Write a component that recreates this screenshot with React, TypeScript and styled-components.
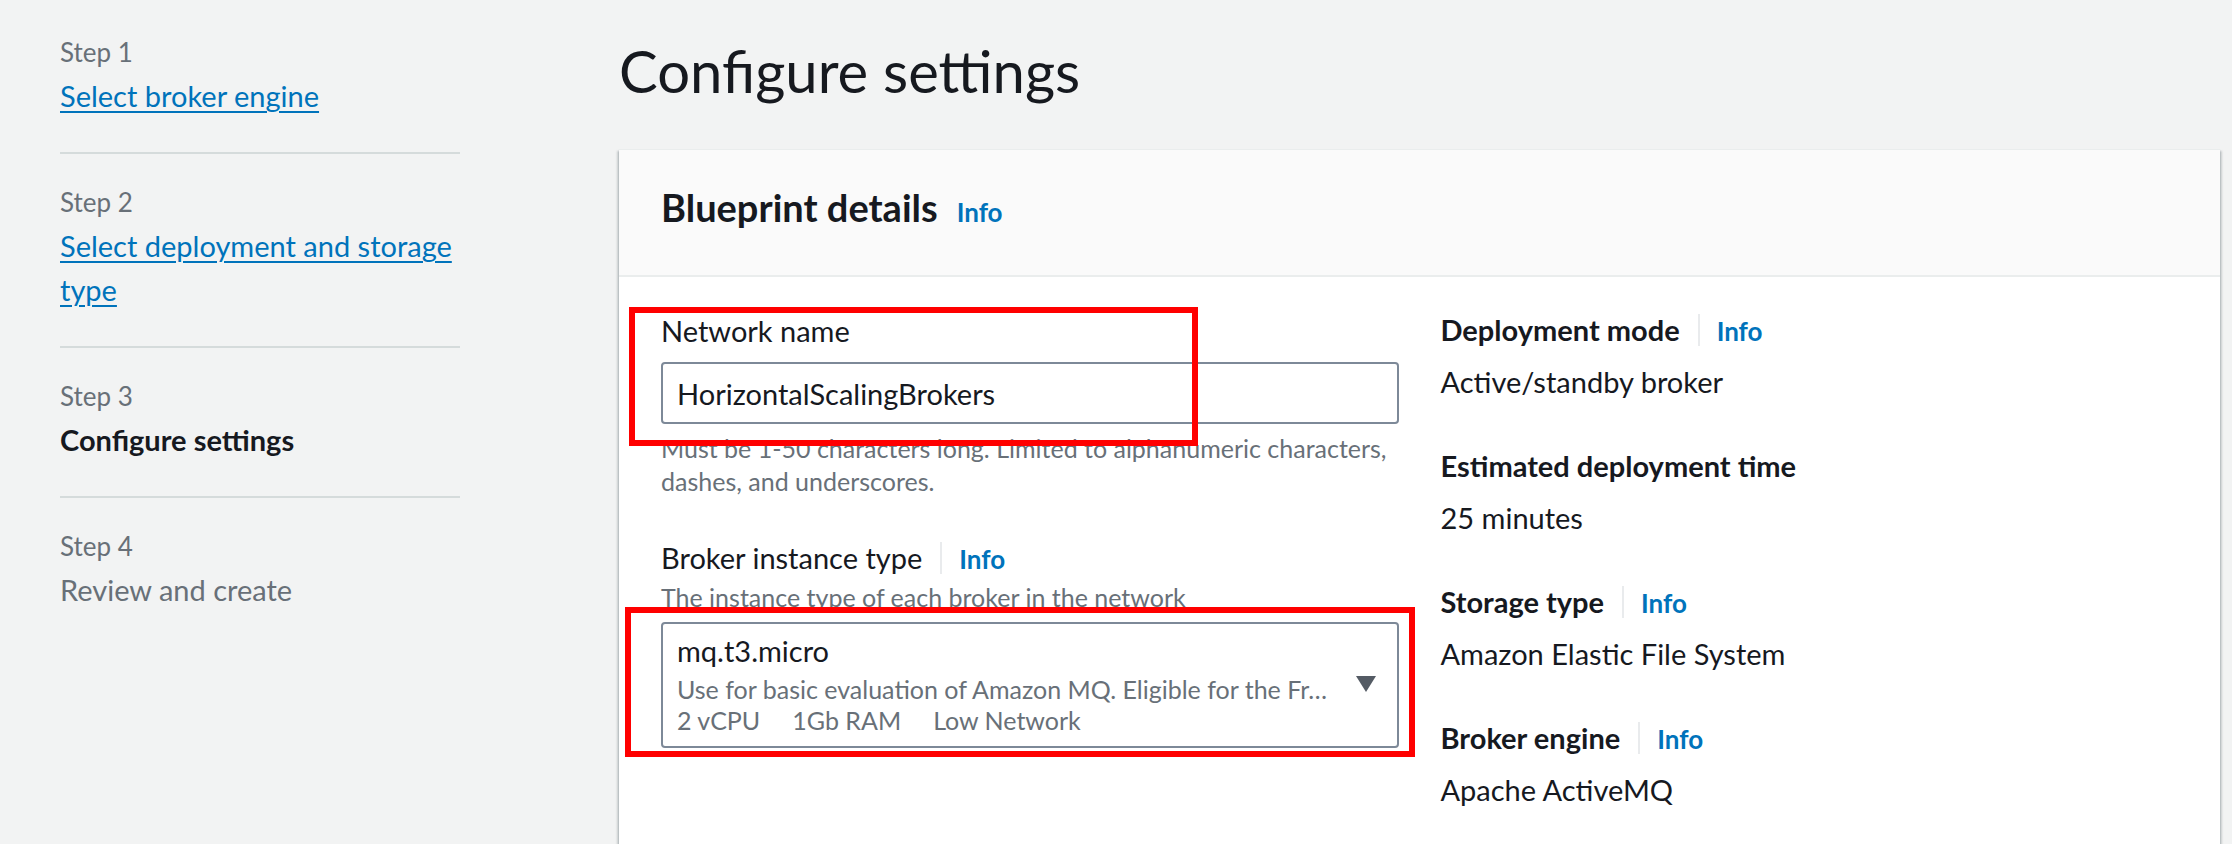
import React from "react";
import styled, { createGlobalStyle } from "styled-components";

const GlobalStyle = createGlobalStyle`
  html, body {
    margin: 0;
    padding: 0;
    background: #f2f3f3;
  }
  body {
    font-family: Lato, "Open Sans", "Liberation Sans", Arial, sans-serif;
    color: #16191f;
    overflow: hidden;
    -webkit-font-smoothing: antialiased;
  }
  *, *::before, *::after {
    box-sizing: border-box;
  }
`;

const Page = styled.div`
  display: flex;
  align-items: flex-start;
  height: 844px;
  padding: 0 12px 0 60px;
`;

/* ---------- Side navigation ---------- */

const Nav = styled.nav`
  flex: none;
  width: 400px;
  padding-top: 4px;
`;

const NavItem = styled.div`
  padding: 30px 0 34px;
  border-bottom: 2px solid #d5dbdb;
  &:last-child {
    border-bottom: none;
  }
`;

const StepLabel = styled.div`
  font-size: 26px;
  line-height: 36px;
  color: #687078;
  margin-bottom: 4px;
`;

type StepState = "done" | "current" | "disabled";

const StepTitle = styled.a<{ $state: StepState }>`
  display: block;
  font-size: 29px;
  line-height: 44px;
  font-weight: ${(p) => (p.$state === "current" ? 700 : 400)};
  color: ${(p) =>
    p.$state === "done" ? "#0073bb" : p.$state === "current" ? "#16191f" : "#687078"};
  text-decoration: ${(p) => (p.$state === "done" ? "underline" : "none")};
  text-decoration-thickness: 2px;
  text-underline-offset: 4px;
  cursor: ${(p) => (p.$state === "done" ? "pointer" : "default")};
`;

/* ---------- Main content ---------- */

const Main = styled.main`
  flex: 1;
  min-width: 0;
  margin-left: 159px;
  padding-top: 35px;
`;

const PageTitle = styled.h1`
  margin: 0 0 42px;
  font-size: 58px;
  line-height: 72px;
  font-weight: 400;
  color: #16191f;
`;

const Card = styled.section`
  background: #ffffff;
  border-top: 1px solid #eaeded;
  box-shadow: 0 2px 2px 0 rgba(0, 28, 36, 0.3), 2px 2px 2px 0 rgba(0, 28, 36, 0.15),
    -2px 2px 2px 0 rgba(0, 28, 36, 0.15);
`;

const CardHeader = styled.header`
  display: flex;
  align-items: baseline;
  gap: 19px;
  padding: 33px 42px 44px;
  background: #fafafa;
  border-bottom: 2px solid #eaeded;
`;

const CardTitle = styled.h2`
  margin: 0;
  font-size: 38px;
  line-height: 48px;
  font-weight: 700;
  color: #16191f;
`;

const InfoLink = styled.a`
  font-size: 26px;
  line-height: 30px;
  font-weight: 700;
  color: #0073bb;
  text-decoration: none;
  cursor: pointer;
`;

const CardBody = styled.div`
  display: grid;
  grid-template-columns: minmax(0, 1fr) minmax(0, 1fr);
  column-gap: 42px;
  padding: 27px 42px 160px;
`;

/* ---------- Form column ---------- */

const FormColumn = styled.div`
  display: flex;
  flex-direction: column;
  padding-top: 5px;
`;

const Annotated = styled.div`
  position: relative;
`;

const Highlight = styled.div<{ $top: number; $left: number; $width: number; $height: number }>`
  position: absolute;
  top: ${(p) => p.$top}px;
  left: ${(p) => p.$left}px;
  width: ${(p) => p.$width}px;
  height: ${(p) => p.$height}px;
  border: 6px solid #ff0000;
  pointer-events: none;
  z-index: 2;
`;

const Field = styled.div<{ $gapTop?: number }>`
  margin-top: ${(p) => p.$gapTop ?? 0}px;
`;

const LabelRow = styled.div`
  display: flex;
  align-items: baseline;
`;

const FieldLabel = styled.label<{ $bold?: boolean }>`
  font-size: 29px;
  line-height: 44px;
  font-weight: ${(p) => (p.$bold ? 700 : 400)};
  color: #16191f;
`;

const VDivider = styled.span`
  align-self: center;
  width: 2px;
  height: 32px;
  margin: 0 17px 0 18px;
  background: #e9ebed;
`;

const Description = styled.div`
  font-size: 25px;
  line-height: 34px;
  color: #687078;
`;

const TextInput = styled.input`
  display: block;
  width: 100%;
  height: 62px;
  margin-top: 9px;
  padding: 0 14px;
  border: 2px solid #7d8998;
  border-radius: 4px;
  background: #ffffff;
  font-family: inherit;
  font-size: 29px;
  color: #16191f;
  outline: none;
`;

const Hint = styled.div`
  margin-top: 8px;
  font-size: 25px;
  line-height: 33px;
  color: #687078;
`;

const SelectBox = styled.div`
  display: flex;
  align-items: center;
  gap: 18px;
  margin-top: 8px;
  padding: 7px 21px 10px 14px;
  border: 2px solid #7d8998;
  border-radius: 4px;
  background: #ffffff;
  cursor: pointer;
`;

const OptionContent = styled.div`
  flex: 1;
  min-width: 0;
`;

const OptionTitle = styled.div`
  font-size: 29px;
  line-height: 40px;
  color: #16191f;
`;

const OptionDescription = styled.div`
  margin-top: 3px;
  font-size: 25px;
  line-height: 31px;
  color: #687078;
  white-space: nowrap;
  overflow: hidden;
  text-overflow: ellipsis;
`;

const OptionTags = styled.div`
  display: flex;
  gap: 32px;
  font-size: 25px;
  line-height: 31px;
  color: #687078;
`;

const Caret = styled.svg`
  flex: none;
  display: block;
`;

/* ---------- Details column ---------- */

const DetailsColumn = styled.div`
  display: flex;
  flex-direction: column;
  gap: 40px;
  padding-top: 4px;
`;

const DetailGroup = styled.div`
  display: flex;
  flex-direction: column;
  gap: 8px;
`;

const DetailValue = styled.div`
  font-size: 29px;
  line-height: 44px;
  color: #16191f;
`;

const steps: { step: string; title: string; state: StepState }[] = [
  { step: "Step 1", title: "Select broker engine", state: "done" },
  { step: "Step 2", title: "Select deployment and storage type", state: "done" },
  { step: "Step 3", title: "Configure settings", state: "current" },
  { step: "Step 4", title: "Review and create", state: "disabled" },
];

const details: { label: string; value: string; info: boolean }[] = [
  { label: "Deployment mode", value: "Active/standby broker", info: true },
  { label: "Estimated deployment time", value: "25 minutes", info: false },
  { label: "Storage type", value: "Amazon Elastic File System", info: true },
  { label: "Broker engine", value: "Apache ActiveMQ", info: true },
];

export default function App() {
  return (
    <>
      <GlobalStyle />
      <Page>
        <Nav>
          {steps.map((s) => (
            <NavItem key={s.step}>
              <StepLabel>{s.step}</StepLabel>
              <StepTitle $state={s.state}>{s.title}</StepTitle>
            </NavItem>
          ))}
        </Nav>

        <Main>
          <PageTitle>Configure settings</PageTitle>
          <Card>
            <CardHeader>
              <CardTitle>Blueprint details</CardTitle>
              <InfoLink>Info</InfoLink>
            </CardHeader>
            <CardBody>
              <FormColumn>
                <Field>
                  <Annotated>
                    <FieldLabel>Network name</FieldLabel>
                    <TextInput readOnly defaultValue="HorizontalScalingBrokers" />
                    <Hint>
                      Must be 1-50 characters long. Limited to alphanumeric characters, dashes, and
                      underscores.
                    </Hint>
                    <Highlight $top={-2} $left={-32} $width={569} $height={139} />
                  </Annotated>
                </Field>

                <Field $gapTop={38}>
                  <LabelRow>
                    <FieldLabel>Broker instance type</FieldLabel>
                    <VDivider />
                    <InfoLink>Info</InfoLink>
                  </LabelRow>
                  <Description>The instance type of each broker in the network</Description>
                  <Annotated>
                    <SelectBox>
                      <OptionContent>
                        <OptionTitle>mq.t3.micro</OptionTitle>
                        <OptionDescription>
                          Use for basic evaluation of Amazon MQ. Eligible for the Fr…
                        </OptionDescription>
                        <OptionTags>
                          <span>2 vCPU</span>
                          <span>1Gb RAM</span>
                          <span>Low Network</span>
                        </OptionTags>
                      </OptionContent>
                      <Caret width="20" height="16" viewBox="0 0 20 16">
                        <polygon points="0,0 20,0 10,16" fill="#545b64" />
                      </Caret>
                    </SelectBox>
                    <Highlight $top={-15} $left={-36} $width={790} $height={150} />
                  </Annotated>
                </Field>
              </FormColumn>

              <DetailsColumn>
                {details.map((d) => (
                  <DetailGroup key={d.label}>
                    <LabelRow>
                      <FieldLabel $bold>{d.label}</FieldLabel>
                      {d.info && (
                        <>
                          <VDivider />
                          <InfoLink>Info</InfoLink>
                        </>
                      )}
                    </LabelRow>
                    <DetailValue>{d.value}</DetailValue>
                  </DetailGroup>
                ))}
              </DetailsColumn>
            </CardBody>
          </Card>
        </Main>
      </Page>
    </>
  );
}
